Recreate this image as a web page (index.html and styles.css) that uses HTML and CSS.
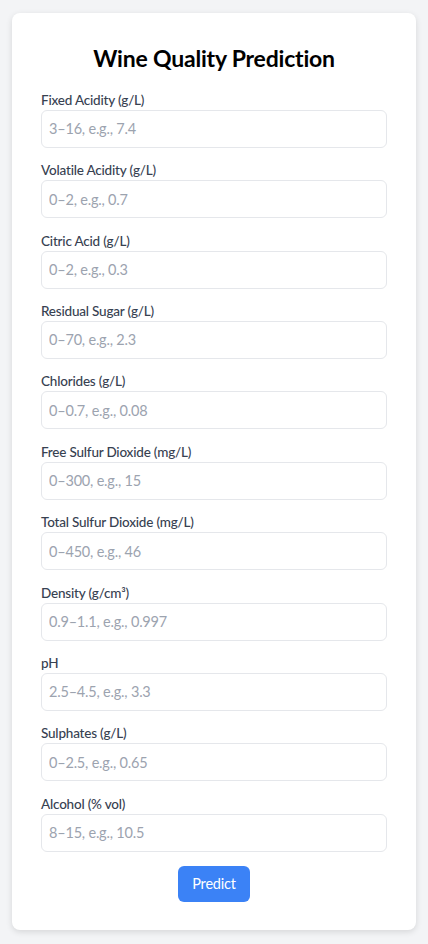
FILE: index.html
```html
<!DOCTYPE html>
<html lang="en">
<head>
<meta charset="utf-8">
<title>Wine Quality Prediction</title>
<link rel="stylesheet" href="styles.css">
</head>
<body>
<main class="card">
  <h1 class="title">Wine Quality Prediction</h1>
  <form class="form">
    <div class="field"><label class="label">Fixed Acidity (g/L)</label><input class="input" placeholder="3–16, e.g., 7.4"></div>
    <div class="field"><label class="label">Volatile Acidity (g/L)</label><input class="input" placeholder="0–2, e.g., 0.7"></div>
    <div class="field"><label class="label">Citric Acid (g/L)</label><input class="input" placeholder="0–2, e.g., 0.3"></div>
    <div class="field"><label class="label">Residual Sugar (g/L)</label><input class="input" placeholder="0–70, e.g., 2.3"></div>
    <div class="field"><label class="label">Chlorides (g/L)</label><input class="input" placeholder="0–0.7, e.g., 0.08"></div>
    <div class="field"><label class="label">Free Sulfur Dioxide (mg/L)</label><input class="input" placeholder="0–300, e.g., 15"></div>
    <div class="field"><label class="label">Total Sulfur Dioxide (mg/L)</label><input class="input" placeholder="0–450, e.g., 46"></div>
    <div class="field"><label class="label">Density (g/cm³)</label><input class="input" placeholder="0.9–1.1, e.g., 0.997"></div>
    <div class="field"><label class="label">pH</label><input class="input" placeholder="2.5–4.5, e.g., 3.3"></div>
    <div class="field"><label class="label">Sulphates (g/L)</label><input class="input" placeholder="0–2.5, e.g., 0.65"></div>
    <div class="field"><label class="label">Alcohol (% vol)</label><input class="input" placeholder="8–15, e.g., 10.5"></div>
    <div class="actions"><button type="button" class="button">Predict</button></div>
  </form>
</main>
</body>
</html>
```
FILE: styles.css
```css
html, body {
  margin: 0;
  padding: 0;
  background: #f3f4f6;
}
body {
  padding: 13px 12px 14px;
  font-family: Lato, "Noto Sans", sans-serif;
  color: #111827;
}
.card {
  background: #ffffff;
  border-radius: 8px;
  box-shadow: 0 2px 6px rgba(0, 0, 0, 0.12);
  padding: 28.8px 29px 28px;
}
.title {
  margin: 0 0 16px;
  font-size: 23px;
  line-height: 32px;
  font-weight: 700;
  letter-spacing: -0.2px;
  text-align: center;
  color: #000000;
}
.form {
  display: flex;
  flex-direction: column;
}
.field {
  display: flex;
  flex-direction: column;
  margin-bottom: 12.4px;
}
.label {
  font-size: 13.5px;
  line-height: 20px;
  font-weight: 500;
  letter-spacing: -0.2px;
  color: #374151;
}
.input {
  box-sizing: border-box;
  height: 38px;
  width: 100%;
  border: 1px solid #e5e7eb;
  border-radius: 6px;
  padding: 0 7px;
  font-family: inherit;
  font-size: 14.5px;
  letter-spacing: -0.2px;
  color: #111827;
  background: #ffffff;
}
.input::placeholder {
  color: #9ca3af;
}
.actions {
  display: flex;
  justify-content: center;
  margin-top: 1.6px;
}
.button {
  width: 72px;
  height: 36px;
  border: none;
  border-radius: 6px;
  background: #3b82f6;
  color: #ffffff;
  font-family: inherit;
  font-size: 14.5px;
  letter-spacing: -0.2px;
  cursor: pointer;
}
```
